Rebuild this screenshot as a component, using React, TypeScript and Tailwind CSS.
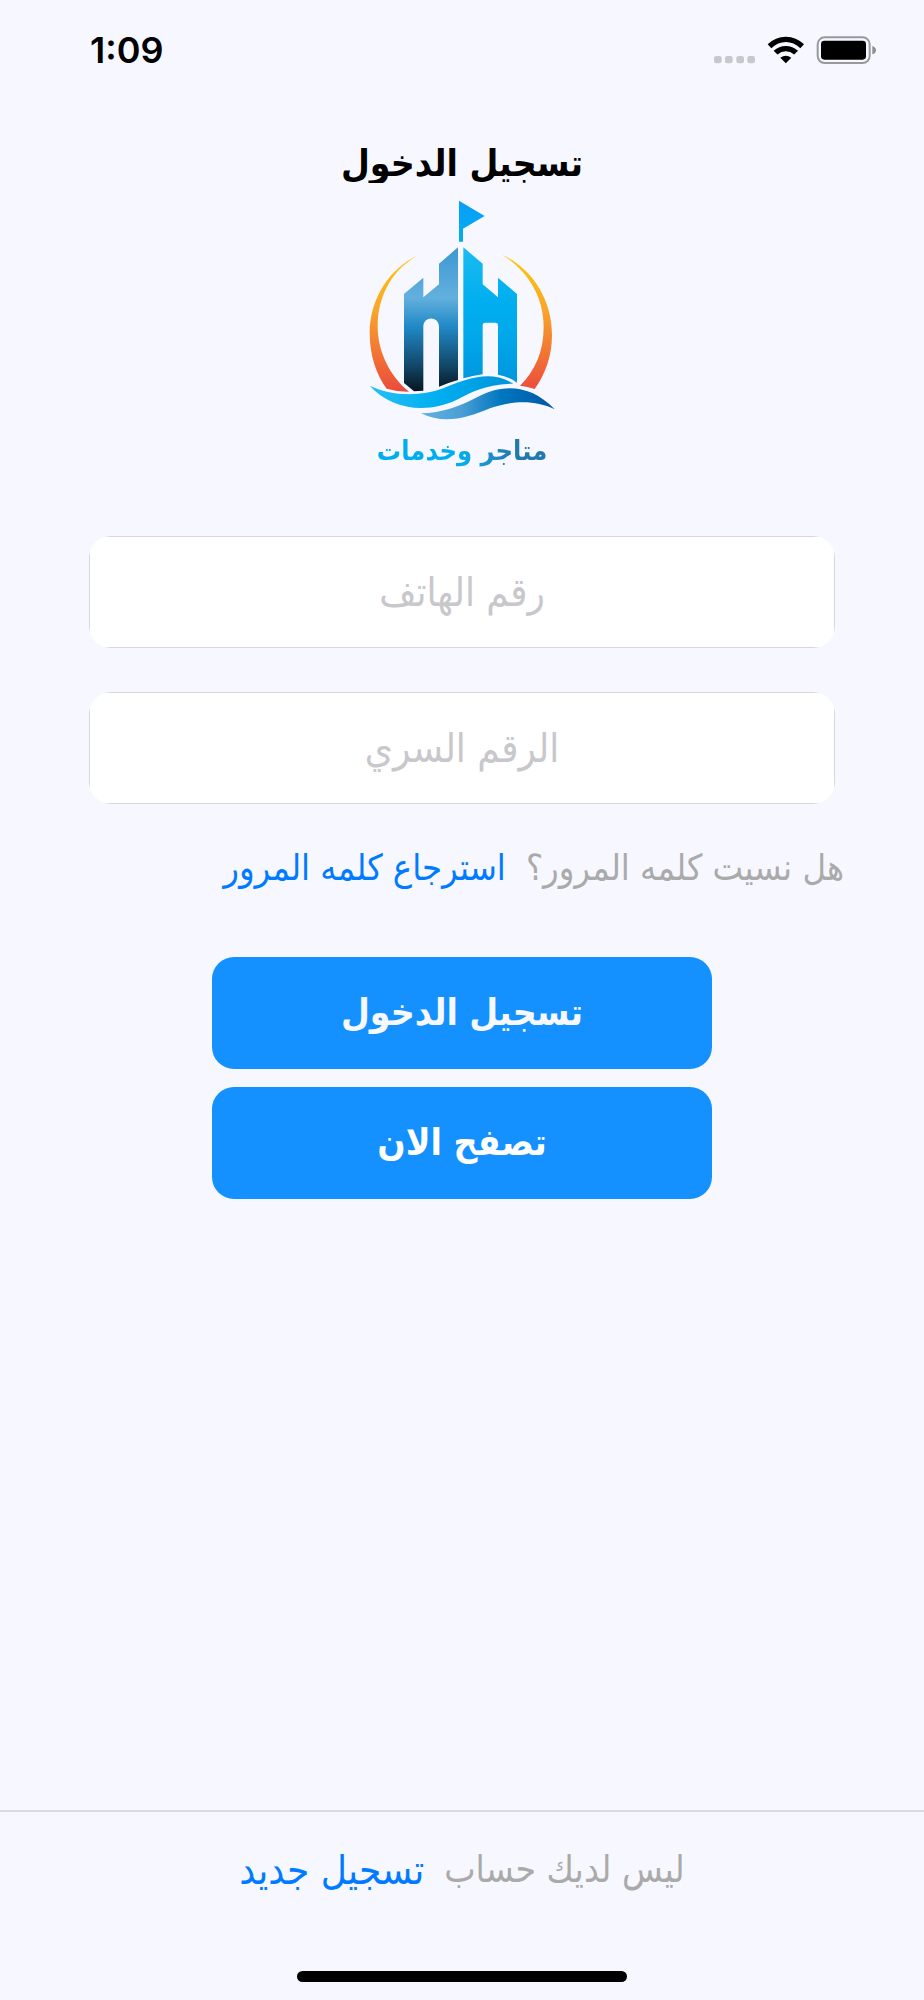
import { useState } from "react"
import type { FormEvent } from "react"

interface FieldProps {
  id: string
  label: string
  type: "tel" | "password"
  value: string
  onChange: (value: string) => void
}

function StatusIcons() {
  return (
    <svg viewBox="69 45 492 90" className="h-[30px] w-[164px]" aria-hidden="true">
      {/* Signal dots */}
      <g fill="#c7c7cc">
        <rect x="72" y="108" width="23" height="22" rx="7" />
        <rect x="105" y="108" width="23" height="22" rx="7" />
        <rect x="139" y="108" width="23" height="22" rx="7" />
        <rect x="172" y="108" width="23" height="22" rx="7" />
      </g>
      {/* Wifi */}
      <path d="M233 73Q256 50 287.500 50T342 73L331 84.500Q311 66 287.500 66T244 84.500Z" />
      <path d="M251 92.500Q267 78 287.500 78T324 92.500L312.500 103.500Q301 94 287.500 94T262.500 103.500Z" />
      <path d="M271 113Q287.500 102 304 113L287.500 130Z" />
      {/* Battery */}
      <rect x="383" y="52" width="156" height="77" rx="21" fill="none" stroke="#98989e" strokeWidth="6" />
      <rect x="393" y="62" width="135" height="57" rx="10" />
      <path d="M547 78Q558 82 558 90.500T547 103Z" fill="#8e8e93" />
    </svg>
  )
}

function Logo() {
  return (
    <svg viewBox="138 201 576 672" className="h-[224px] w-[192px]" role="img" aria-label="متاجر وخدمات">
      <defs>
        <linearGradient id="flag" x1="0" y1="0" x2="0" y2="1">
          <stop offset="0" stopColor="#0a9df8" />
          <stop offset="1" stopColor="#00aef0" />
        </linearGradient>
        <linearGradient id="ring" gradientUnits="userSpaceOnUse" x1="0" y1="375" x2="0" y2="785">
          <stop offset="0" stopColor="#fcc907" />
          <stop offset="0.4" stopColor="#f9a52b" />
          <stop offset="1" stopColor="#eb4b3b" />
        </linearGradient>
        <linearGradient id="towerDark" gradientUnits="userSpaceOnUse" x1="0" y1="352" x2="0" y2="785">
          <stop offset="0" stopColor="#3d97d3" />
          <stop offset="0.35" stopColor="#62b0de" />
          <stop offset="0.55" stopColor="#2089c6" />
          <stop offset="0.8" stopColor="#134c70" />
          <stop offset="1" stopColor="#06151f" />
        </linearGradient>
        <linearGradient id="towerLight" gradientUnits="userSpaceOnUse" x1="0" y1="352" x2="0" y2="760">
          <stop offset="0" stopColor="#1bbcf1" />
          <stop offset="0.4" stopColor="#00aeef" />
          <stop offset="0.6" stopColor="#00aaeb" />
          <stop offset="1" stopColor="#0096df" />
        </linearGradient>
        <linearGradient id="waveTop">
          <stop offset="0" stopColor="#24c0f5" />
          <stop offset="0.5" stopColor="#00aeef" />
          <stop offset="1" stopColor="#0092da" />
        </linearGradient>
        <linearGradient id="waveBottom">
          <stop offset="0" stopColor="#65b2e1" />
          <stop offset="0.3" stopColor="#4b9fd5" />
          <stop offset="0.6" stopColor="#0077c0" />
          <stop offset="1" stopColor="#0055a6" />
        </linearGradient>
      </defs>
      <path d="M417 212L494 258L429 296V335H417Z" fill="url(#flag)" />
      <path d="M296 375C210 413 149 505 149 610C149 675 169 735 200 776Q235 786 267 785C211 740 173 665 173 590C173 492 222 414 296 375Z" fill="url(#ring)" />
      <path d="M547 375C633 413 696 505 696 615C696 675 677 732 644 777Q622 769 600 767C645 722 671 665 671 590C671 500 622 420 547 375Z" fill="url(#ring)" />
      <path d="M252 492L310 443V502L357 463V401L414 352V750Q386 758 357 770V590C357 557 310 557 310 590V782L282 784L252 759Z" fill="url(#towerDark)" />
      <path d="M430 352L488 401V463L534 502V443L591 492V758Q565 739 534 734V584Q534 578 526 578H496Q488 578 488 584V733Q458 737 430 745Z" fill="url(#towerLight)" />
      {/* Waves, outlined in the page colour to keep them clear of the towers */}
      <g stroke="#f7f8ff" strokeWidth="8" paintOrder="stroke">
        <path d="M149 767C205 794 290 804 370 775C450 740 517 721 580 761C500 762 450 788 415 807C315 857 210 834 149 767Z" fill="url(#waveTop)" />
        <path d="M303 850C365 850 418 829 465 805C535 765 625 754 704 838C640 805 565 815 510 835C440 865 370 884 303 850Z" fill="url(#waveBottom)" />
      </g>
    </svg>
  )
}

function Field({ id, label, type, value, onChange }: FieldProps) {
  return (
    <div className="overflow-hidden rounded-[22px]">
      <input
        id={id}
        type={type}
        dir="rtl"
        aria-label={label}
        value={value}
        placeholder={label}
        onChange={(e) => onChange(e.target.value)}
        className="block h-28 w-full border border-[#d8d8da] bg-white text-center text-[40px] leading-[72px] text-gray-900 outline-none placeholder:overflow-visible placeholder:text-[#c7c7cc]"
      />
    </div>
  )
}

export default function App() {
  const [phone, setPhone] = useState("")
  const [password, setPassword] = useState("")

  const handleSubmit = (e: FormEvent) => {
    e.preventDefault()
  }

  return (
    <div className="flex min-h-screen flex-col bg-[#f7f8ff] font-['DejaVu_Sans_Condensed','DejaVu_Sans',sans-serif]">
      <header className="flex items-center justify-between pt-7 pr-[47px] pl-[90px]">
        <time className="font-['Inter',sans-serif] text-[36px] leading-[44px] font-semibold">1:09</time>
        <StatusIcons />
      </header>

      <main dir="rtl" className="flex flex-1 flex-col items-center pt-[68px]">
        <h1 className="h-[43px] overflow-hidden text-[37px] leading-[48px] font-bold">تسجيل الدخول</h1>
        <div className="mt-[14px] flex flex-col items-center">
          <Logo />
          <p className="bg-linear-to-l from-[#2378ad] from-20% to-[#00adef] to-50% bg-clip-text text-[27px] leading-[60px] font-bold text-transparent">متاجر وخدمات</p>
        </div>

        <form onSubmit={handleSubmit} className="mt-[55px] flex w-full flex-col items-center">
          <div className="flex w-full flex-col gap-11 px-[89px]">
            <Field id="phone" label="رقم الهاتف" type="tel" value={phone} onChange={setPhone} />
            <Field id="password" label="الرقم السري" type="password" value={password} onChange={setPassword} />
          </div>

          <div className="mt-10 flex w-full items-center gap-5 px-20 text-[36px] leading-[48px]">
            <span className="text-[#aaaaaa]">هل نسيت كلمه المرور؟</span>
            <a href="#recover" className="text-[#007aff]">استرجاع كلمه المرور</a>
          </div>

          <div className="mt-[65px] flex w-[500px] max-w-full flex-col gap-[18px]">
            <button type="submit" className="h-28 rounded-[22px] bg-[#1490ff] text-[37px] font-bold text-[#f7f8ff]">تسجيل الدخول</button>
            <button type="button" className="h-28 rounded-[22px] bg-[#1490ff] text-[37px] font-bold text-white">تصفح الان</button>
          </div>
        </form>
      </main>

      <footer dir="rtl" className="border-t-2 border-[#d9dade] pt-[30px]">
        <p className="flex items-center justify-center gap-5 leading-[56px]">
          <span className="text-[37px] text-[#aaaaaa]">ليس لديك حساب</span>
          <a href="#register" className="text-[40px] text-[#007aff]">تسجيل جديد</a>
        </p>
        <div className="mx-auto mt-[73px] mb-[18px] h-[11px] w-[330px] rounded-full bg-black" />
      </footer>
    </div>
  )
}
